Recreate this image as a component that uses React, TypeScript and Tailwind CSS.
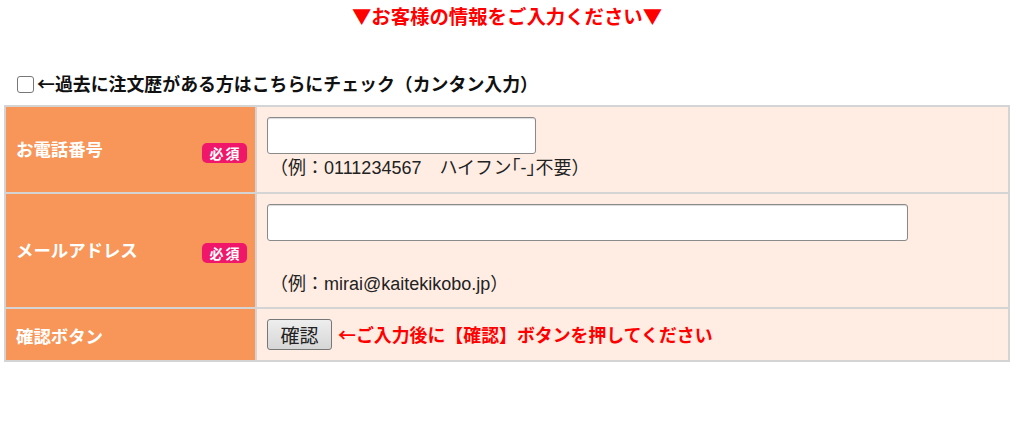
import React from "react";

const FONT = { fontFamily: '"Noto Sans CJK JP", "Noto Sans", sans-serif' };
const EX_FONT = { fontFamily: '"Liberation Sans", "Noto Sans CJK JP", sans-serif' };

function Badge() {
  return (
    <span className="flex h-[20px] w-[45px] items-center justify-center rounded-[5px] bg-[#f0176b] text-[14px] font-bold leading-none text-white tracking-[2px] pl-[2px]">
      必須
    </span>
  );
}

export default function App() {
  return (
    <div className="w-[1024px] h-[430px] bg-white text-[#222]" style={FONT}>
      <div className="ml-[4px] w-[1006px]">
        <div className="pt-[3px] text-center text-[19.4px] font-bold leading-[26px] text-[#ff0000]">
          ▼お客様の情報をご入力ください▼
        </div>
        <div className="mt-[41px] flex h-[28px] items-center pl-[13px]">
          <span className="h-[17px] w-[17px] rounded-[3px] border border-[#777] bg-white" />
          <span className="ml-[3px] text-[17.9px] font-bold leading-none text-[#111]">
            ←過去に注文歴がある方はこちらにチェック（カンタン入力）
          </span>
        </div>
        <div className="mt-[7px] border-2 border-[#d4d4d4] bg-[#d4d4d4]">
          {/* Row 1 */}
          <div className="flex h-[85px]">
            <div className="flex w-[249px] items-center justify-between bg-[#f79658] pl-[10px] pr-[8px]">
              <span className="text-[17.4px] font-bold text-white">お電話番号</span>
              <span className="mt-[6px]"><Badge /></span>
            </div>
            <div className="ml-[2px] flex-1 bg-[#ffede3] pl-[10px] pt-[10px]">
              <div className="h-[37px] w-[269px] rounded-[3px] border border-[#8a8a8a] bg-white shadow-[inset_0_1px_1px_rgba(0,0,0,0.15)]" />
              <div className="pl-[3px] text-[18px] leading-[28px] text-[#222]" style={EX_FONT}>
                （例：0111234567　ハイフン｢-｣不要）
              </div>
            </div>
          </div>
          {/* Row 2 */}
          <div className="mt-[2px] flex h-[113px]">
            <div className="flex w-[249px] items-center justify-between bg-[#f79658] pl-[10px] pr-[8px]">
              <span className="text-[17.4px] font-bold text-white">メールアドレス</span>
              <span className="mt-[4px]"><Badge /></span>
            </div>
            <div className="ml-[2px] flex-1 bg-[#ffede3] pl-[10px] pt-[10px]">
              <div className="h-[37px] w-[641px] rounded-[3px] border border-[#8a8a8a] bg-white shadow-[inset_0_1px_1px_rgba(0,0,0,0.15)]" />
              <div className="mt-[29px] pl-[3px] text-[18px] leading-[28px] text-[#222]" style={EX_FONT}>
                （例：mirai@kaitekikobo.jp）
              </div>
            </div>
          </div>
          {/* Row 3 */}
          <div className="mt-[2px] flex h-[51px]">
            <div className="flex w-[249px] items-center bg-[#f79658] pl-[10px] pt-[3px]">
              <span className="text-[17.4px] font-bold text-white">確認ボタン</span>
            </div>
            <div className="ml-[2px] flex flex-1 items-start bg-[#ffede3] pl-[10px] pt-[10px]">
              <button className="h-[31px] w-[65px] rounded-[3px] border border-[#777] bg-gradient-to-b from-[#eeeeee] to-[#d6d6d6] text-[19px] leading-none text-[#222]">
                確認
              </button>
              <span className="ml-[6px] mt-[4px] text-[17.9px] font-bold leading-[22px] text-[#ff0000]">
                ←ご入力後に【確認】ボタンを押してください
              </span>
            </div>
          </div>
        </div>
      </div>
    </div>
  );
}
